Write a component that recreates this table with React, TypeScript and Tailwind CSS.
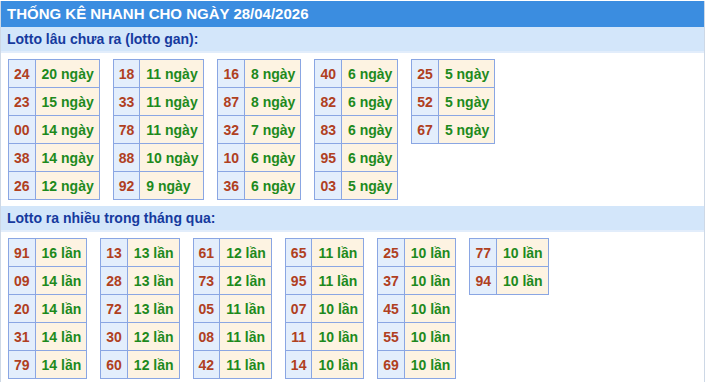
import React from "react";

type Row = [string, string];

const gan: Row[][] = [
  [["24", "20 ngày"], ["23", "15 ngày"], ["00", "14 ngày"], ["38", "14 ngày"], ["26", "12 ngày"]],
  [["18", "11 ngày"], ["33", "11 ngày"], ["78", "11 ngày"], ["88", "10 ngày"], ["92", "9 ngày"]],
  [["16", "8 ngày"], ["87", "8 ngày"], ["32", "7 ngày"], ["10", "6 ngày"], ["36", "6 ngày"]],
  [["40", "6 ngày"], ["82", "6 ngày"], ["83", "6 ngày"], ["95", "6 ngày"], ["03", "5 ngày"]],
  [["25", "5 ngày"], ["52", "5 ngày"], ["67", "5 ngày"]],
];

const nhieu: Row[][] = [
  [["91", "16 lần"], ["09", "14 lần"], ["20", "14 lần"], ["31", "14 lần"], ["79", "14 lần"]],
  [["13", "13 lần"], ["28", "13 lần"], ["72", "13 lần"], ["30", "12 lần"], ["60", "12 lần"]],
  [["61", "12 lần"], ["73", "12 lần"], ["05", "11 lần"], ["08", "11 lần"], ["42", "11 lần"]],
  [["65", "11 lần"], ["95", "11 lần"], ["07", "10 lần"], ["11", "10 lần"], ["14", "10 lần"]],
  [["25", "10 lần"], ["37", "10 lần"], ["45", "10 lần"], ["55", "10 lần"], ["69", "10 lần"]],
  [["77", "10 lần"], ["94", "10 lần"]],
];

function Tbl({ rows }: { rows: Row[] }) {
  return (
    <table className="border-collapse border border-[#8aa6e3] self-start">
      <tbody>
        {rows.map(([n, v], i) => (
          <tr key={i} className="h-[28px]">
            <td className="border border-[#8aa6e3] bg-[#e3eefc] text-[#b0401f] px-[5px] text-center leading-none">{n}</td>
            <td className="border border-[#8aa6e3] bg-[#fdf3e2] text-[#1d8a1d] pl-[6px] pr-[5px] leading-none whitespace-nowrap">{v}</td>
          </tr>
        ))}
      </tbody>
    </table>
  );
}

function Section({ title, tables }: { title: string; tables: Row[][] }) {
  return (
    <div>
      <div className="h-[26px] bg-[#d3e6fa] border-b-[2px] border-[#e2edfb] text-[#163a9e] pl-[6px] flex items-center">
        {title}
      </div>
      <div className="flex gap-[13px] pl-[7px] pt-[6px] pb-[6px]">
        {tables.map((t, i) => (
          <Tbl key={i} rows={t} />
        ))}
      </div>
    </div>
  );
}

export default function App() {
  return (
    <div
      className="w-[705px] border-x border-[#cdd8e6] bg-white text-[14px] font-bold"
      style={{ fontFamily: '"Liberation Sans", Arial, sans-serif' }}
    >
      <div className="h-[26px] mt-[1px] bg-[#3b8de0] text-white text-[15px] pl-[6px] flex items-center">
        THỐNG KÊ NHANH CHO NGÀY 28/04/2026
      </div>
      <Section title="Lotto lâu chưa ra (lotto gan):" tables={gan} />
      <Section title="Lotto ra nhiều trong tháng qua:" tables={nhieu} />
    </div>
  );
}
